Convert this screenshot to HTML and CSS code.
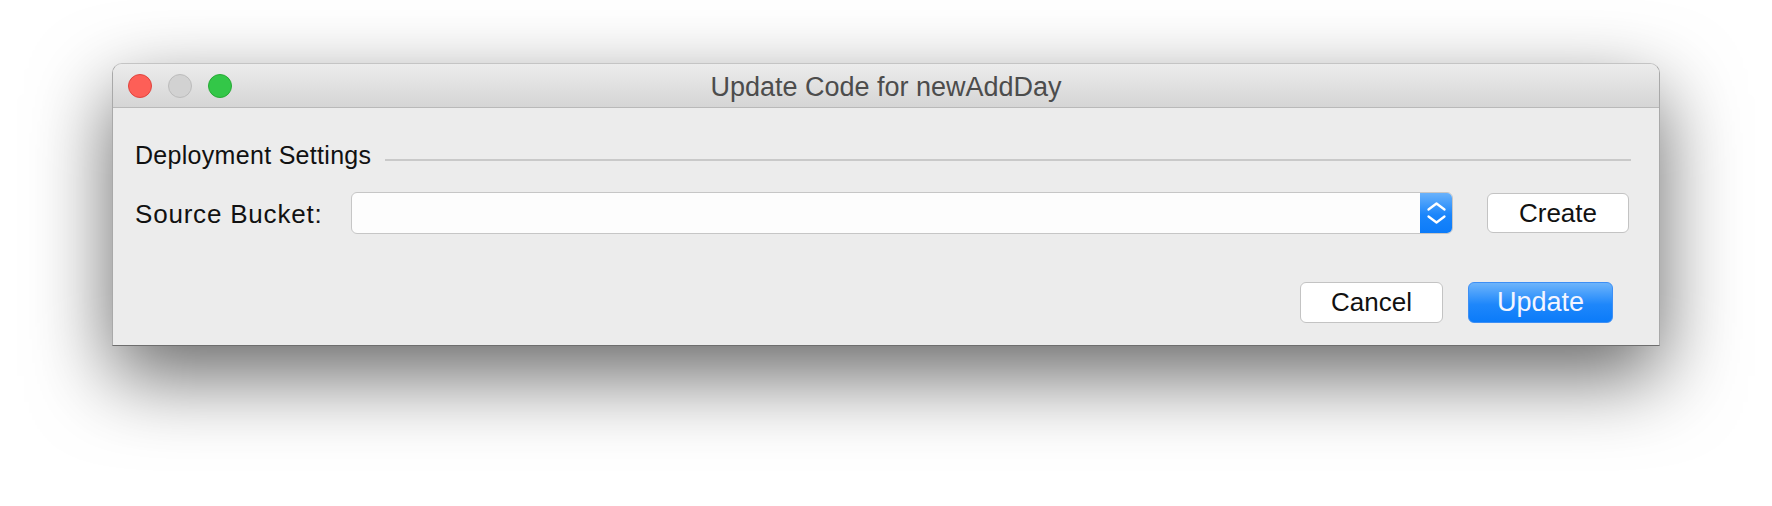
FILE: index.html
```html
<html>
  <head>
    <title>Update Code for newAddDay</title>
    <link rel="stylesheet" href="styles.css">
  </head>
  <body>
    <div class="window">
      <div class="titlebar">
        <div class="lights">
          <span class="light close"></span>
          <span class="light minimize"></span>
          <span class="light zoom"></span>
        </div>
        <div class="title">Update Code for newAddDay</div>
        <div></div>
      </div>
      <div class="content">
        <div class="section">
          <span class="section-title">Deployment Settings</span>
          <div class="rule"></div>
        </div>
        <div class="field-row">
          <label class="label">Source Bucket:</label>
          <div class="select">
            <div class="select-value"></div>
            <div class="stepper">
              <svg width="33" height="40" viewBox="0 0 33 40">
                <polyline points="8.5,16.5 16.5,10.5 24.5,16.5" fill="none" stroke="#fff" stroke-width="2.3" stroke-linecap="round" stroke-linejoin="round"/>
                <polyline points="8.5,23.5 16.5,29.5 24.5,23.5" fill="none" stroke="#fff" stroke-width="2.3" stroke-linecap="round" stroke-linejoin="round"/>
              </svg>
            </div>
          </div>
          <button class="button create">Create</button>
        </div>
        <div class="actions">
          <button class="button cancel">Cancel</button>
          <button class="button primary">Update</button>
        </div>
      </div>
    </div>
  </body>
</html>
```

FILE: styles.css
```css
/* Page */
body {
  margin: 0;
  background-color: #ffffff;
  font-family: "Liberation Sans", Arial, sans-serif;
  color: #111111;
}
/* Dialog window */
.window {
  width: 1546px;
  margin: 63px 0 0 112px;
  border: 1px solid #a9a9a9;
  border-top-color: #c4c4c4;
  border-bottom-color: #6e6e6e;
  border-radius: 10px 10px 0 0;
  background-color: #ececec;
  box-shadow: 0 30px 80px rgba(0, 0, 0, 0.6);
}
.titlebar {
  display: grid;
  grid-template-columns: 1fr auto 1fr;
  align-items: center;
  height: 43px;
  border-bottom: 1px solid #b9b9b9;
  border-radius: 9px 9px 0 0;
  background: linear-gradient(#ececec, #d5d5d5);
}
.lights {
  display: flex;
  gap: 16px;
  padding-left: 15px;
  padding-top: 1px;
}
.light {
  width: 22px;
  height: 22px;
  border-radius: 50%;
  border: 1px solid;
}
.light.close {
  background-color: #fd5f57;
  border-color: #e0443e;
}
.light.minimize {
  background-color: #d2d2d2;
  border-color: #bcbcbc;
}
.light.zoom {
  background-color: #33c748;
  border-color: #27aa35;
}
.title {
  font-size: 27px;
  color: #4c4c4c;
  padding-top: 4px;
}
/* Dialog body */
.content {
  display: flex;
  flex-direction: column;
  padding: 31px 30px 22px 22px;
}
.section {
  display: flex;
  align-items: flex-start;
  height: 30px;
  margin-right: -2px;
}
.section-title {
  font-size: 25px;
  line-height: 30px;
  letter-spacing: 0.3px;
  padding-top: 1px;
}
.rule {
  flex: 1;
  height: 2px;
  margin: 20px 0 0 14px;
  background-color: #c9c9c9;
}
.field-row {
  display: flex;
  align-items: center;
  margin-top: 23px;
  height: 42px;
}
.label {
  width: 216px;
  font-size: 26px;
  line-height: 30px;
  letter-spacing: 0.8px;
  padding-top: 2px;
}
.select {
  flex: 1;
  display: flex;
  height: 40px;
  margin-right: 34px;
  border: 1px solid #c6c6c6;
  border-radius: 6px;
  background-color: #fdfdfd;
  overflow: hidden;
}
.select-value {
  flex: 1;
}
.stepper {
  width: 33px;
  margin: -1px -1px -1px 0;
  border-radius: 0 6px 6px 0;
  background: linear-gradient(#6db4fb, #1a85fb 55%, #0b7bf9);
  display: flex;
  align-items: center;
  justify-content: center;
}
.button {
  font-family: "Liberation Sans", Arial, sans-serif;
  font-size: 26px;
  color: #111111;
  background-color: #ffffff;
  border: 1px solid #c3c3c3;
  border-radius: 6px;
  padding: 0;
}
.create {
  width: 142px;
  height: 40px;
}
.actions {
  display: flex;
  justify-content: flex-end;
  gap: 25px;
  margin-top: 48px;
  margin-right: 16px;
}
.cancel {
  width: 143px;
  height: 41px;
}
.primary {
  width: 145px;
  height: 41px;
  color: #f3f5ff;
  font-size: 27px;
  border-color: #3d8ff5;
  background: linear-gradient(#6db4fb, #1e87fb 55%, #0b7bf9);
}
```
